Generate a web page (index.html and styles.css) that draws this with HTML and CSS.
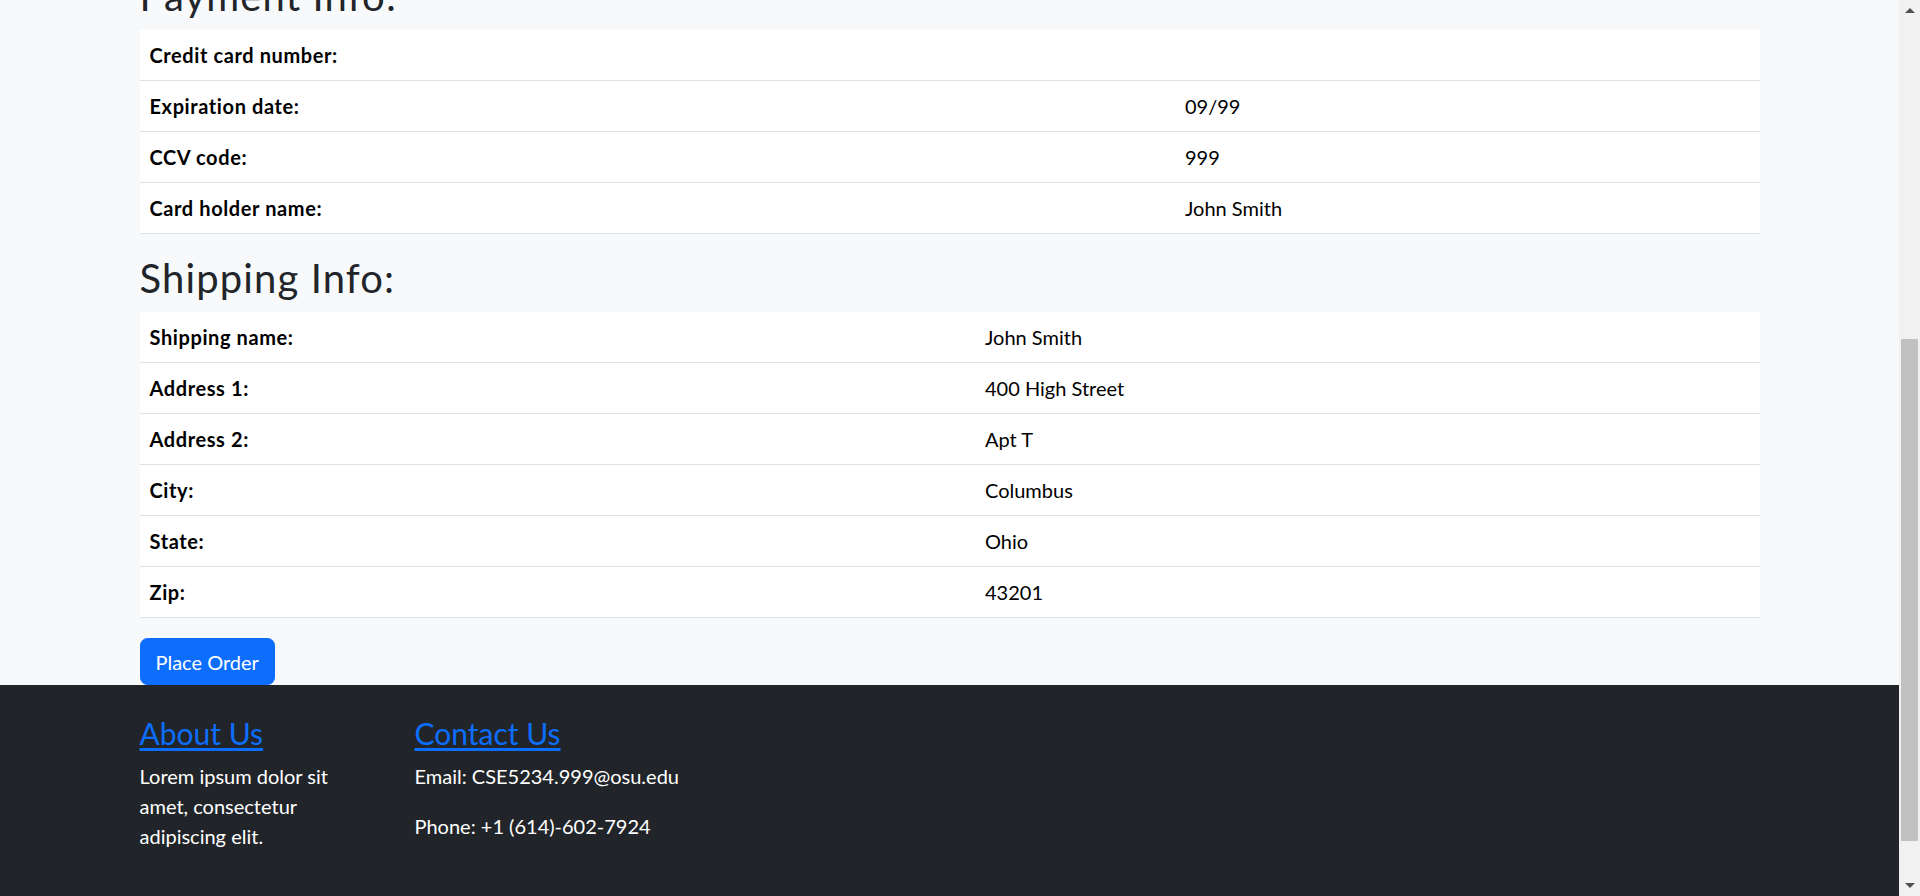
FILE: index.html
```html
<!DOCTYPE html>
<html lang="en">
<head>
<meta charset="utf-8">
<title>Confirm Order</title>
<link rel="stylesheet" href="styles.css">
</head>
<body>
<div class="window">
  <div class="viewport">
    <nav class="topbar">
      <div class="container topbar-inner">
        <a class="brand" href="#">CSE5234 Store</a>
        <a class="nav-link" href="#">Purchase</a>
      </div>
    </nav>
    <main class="container page-main">
      <h1 class="page-title">Confirm Your Order</h1>
      <h2 class="section-title">Order Summary:</h2>
      <table class="info-table summary">
        <colgroup><col class="label-col"><col></colgroup>
        <tbody>
          <tr><th>Product 1:</th><td>1</td></tr>
          <tr><th>Product 2:</th><td>2</td></tr>
          <tr><th>Product 3:</th><td>0</td></tr>
          <tr><th>Product 4:</th><td>1</td></tr>
          <tr><th>Product 5:</th><td>0</td></tr>
        </tbody>
      </table>

      <h2 class="section-title">Payment Info:</h2>
      <table class="info-table payment">
        <colgroup><col class="label-col"><col></colgroup>
        <tbody>
          <tr><th>Credit card number:</th><td></td></tr>
          <tr><th>Expiration date:</th><td>09/99</td></tr>
          <tr><th>CCV code:</th><td>999</td></tr>
          <tr><th>Card holder name:</th><td>John Smith</td></tr>
        </tbody>
      </table>

      <h2 class="section-title">Shipping Info:</h2>
      <table class="info-table shipping">
        <colgroup><col class="label-col"><col></colgroup>
        <tbody>
          <tr><th>Shipping name:</th><td>John Smith</td></tr>
          <tr><th>Address 1:</th><td>400 High Street</td></tr>
          <tr><th>Address 2:</th><td>Apt T</td></tr>
          <tr><th>City:</th><td>Columbus</td></tr>
          <tr><th>State:</th><td>Ohio</td></tr>
          <tr><th>Zip:</th><td>43201</td></tr>
        </tbody>
      </table>

      <div class="actions">
        <button class="btn-order" type="button">Place Order</button>
      </div>
    </main>
    <footer class="site-footer">
      <div class="container">
        <div class="footer-row">
          <div class="footer-col about">
            <h4 class="footer-title"><a href="#">About Us</a></h4>
            <p>Lorem ipsum dolor sit amet, consectetur adipiscing elit.</p>
          </div>
          <div class="footer-col contact">
            <h4 class="footer-title"><a href="#">Contact Us</a></h4>
            <p>Email: CSE5234.999@osu.edu</p>
            <p>Phone: +1 (614)-602-7924</p>
          </div>
        </div>
      </div>
    </footer>
  </div>
  <div class="scrollbar" aria-hidden="true">
    <div class="sb-btn sb-up"></div>
    <div class="sb-track"><div class="sb-thumb"></div></div>
    <div class="sb-btn sb-down"></div>
  </div>
</div>
<script src="script.js"></script>
</body>
</html>
```
FILE: styles.css
```css
* { box-sizing: border-box; }

html, body { height: 100%; }

body {
  margin: 0;
  overflow: hidden;
  font-family: Lato, "Liberation Sans", sans-serif;
  font-size: 20px;
  line-height: 1.5;
  color: #212529;
  background: #f8f9fa;
}

.window {
  display: flex;
  height: 100vh;
}

.viewport {
  flex: 1;
  min-width: 0;
  overflow: hidden;
  background: #f8f9fa;
}

/* window scrollbar */
.scrollbar {
  width: 21px;
  flex: none;
  display: flex;
  flex-direction: column;
  background: #f1f1f1;
}
.sb-btn {
  height: 21px;
  flex: none;
  display: flex;
  align-items: center;
  justify-content: center;
}
.sb-up::before {
  content: "";
  border-left: 5px solid transparent;
  border-right: 5px solid transparent;
  border-bottom: 5px solid #505050;
}
.sb-down::before {
  content: "";
  border-left: 5px solid transparent;
  border-right: 5px solid transparent;
  border-top: 5px solid #505050;
}
.sb-track { flex: 1; }
.sb-thumb {
  margin: 318px 2px 0;
  height: 502px;
  background: #c1c1c1;
}

.container {
  max-width: 1650px;
  margin: 0 auto;
  padding: 0 15px;
}

.topbar { background: #fff; border-bottom: 1px solid #dee2e6; }
.topbar-inner { display: flex; align-items: center; gap: 30px; height: 70px; }
.brand { font-size: 25px; color: #212529; text-decoration: none; }
.nav-link { color: rgba(0,0,0,.65); text-decoration: none; }

.page-main { padding-top: 66px; }

.page-title {
  font-size: 50px;
  font-weight: 500;
  line-height: 1.2;
  margin: 0 0 10px;
}

.section-title {
  font-size: 40px;
  font-weight: 400;
  line-height: 1.2;
  letter-spacing: 0.028em;
  margin: 0 0 10px;
  color: #212529;
}

.info-table {
  width: 100%;
  table-layout: fixed;
  border-collapse: collapse;
  margin-bottom: 20px;
  background: #fff;
  color: #000;
}

.info-table th,
.info-table td {
  padding: 10px;
  border-bottom: 1px solid #dee2e6;
  text-align: left;
  vertical-align: top;
  line-height: 30px;
}

.info-table th { font-weight: 700; letter-spacing: 0.03em; }
.info-table td { font-weight: 400; }

.payment .label-col { width: 1035.5px; }
.shipping .label-col,
.summary .label-col { width: 835.5px; }

.actions { display: flex; }

.btn-order {
  font: inherit;
  font-size: 20px;
  line-height: 30px;
  padding: 7.5px 15px;
  border: 1.25px solid #0d6efd;
  border-radius: 7.5px;
  background: #0d6efd;
  color: #fff;
  cursor: pointer;
}

.site-footer {
  background: #212529;
  color: #fff;
  padding: 30px 0 85px;
}

.footer-row { display: flex; margin: 0 -15px; }
.footer-col { padding: 0 15px; }
.footer-col.about { width: 275px; }
.footer-col.contact { width: 412.5px; }

.footer-title {
  font-size: 30px;
  font-weight: 400;
  line-height: 1.2;
  margin: 0 0 10px;
}
.footer-title a { color: #0d6efd; text-decoration: underline; text-underline-offset: 3px; }

.site-footer p { margin: 0 0 20px; }
.footer-col.about p { max-width: 232px; }
```
FILE: script.js
```js
function pinView() {
  var vp = document.querySelector('.viewport');
  var t = document.querySelector('.payment');
  if (!vp || !t) return;
  var y = t.getBoundingClientRect().top - vp.getBoundingClientRect().top + vp.scrollTop - 30;
  vp.scrollTop = Math.round(y);

  var track = document.querySelector('.sb-track');
  var thumb = document.querySelector('.sb-thumb');
  var L = track.clientHeight;
  var H = vp.scrollHeight;
  var C = vp.clientHeight;
  thumb.style.height = (L * C / H) + 'px';
  thumb.style.marginTop = (L * vp.scrollTop / H) + 'px';
}
pinView();
window.addEventListener('load', pinView);
```
